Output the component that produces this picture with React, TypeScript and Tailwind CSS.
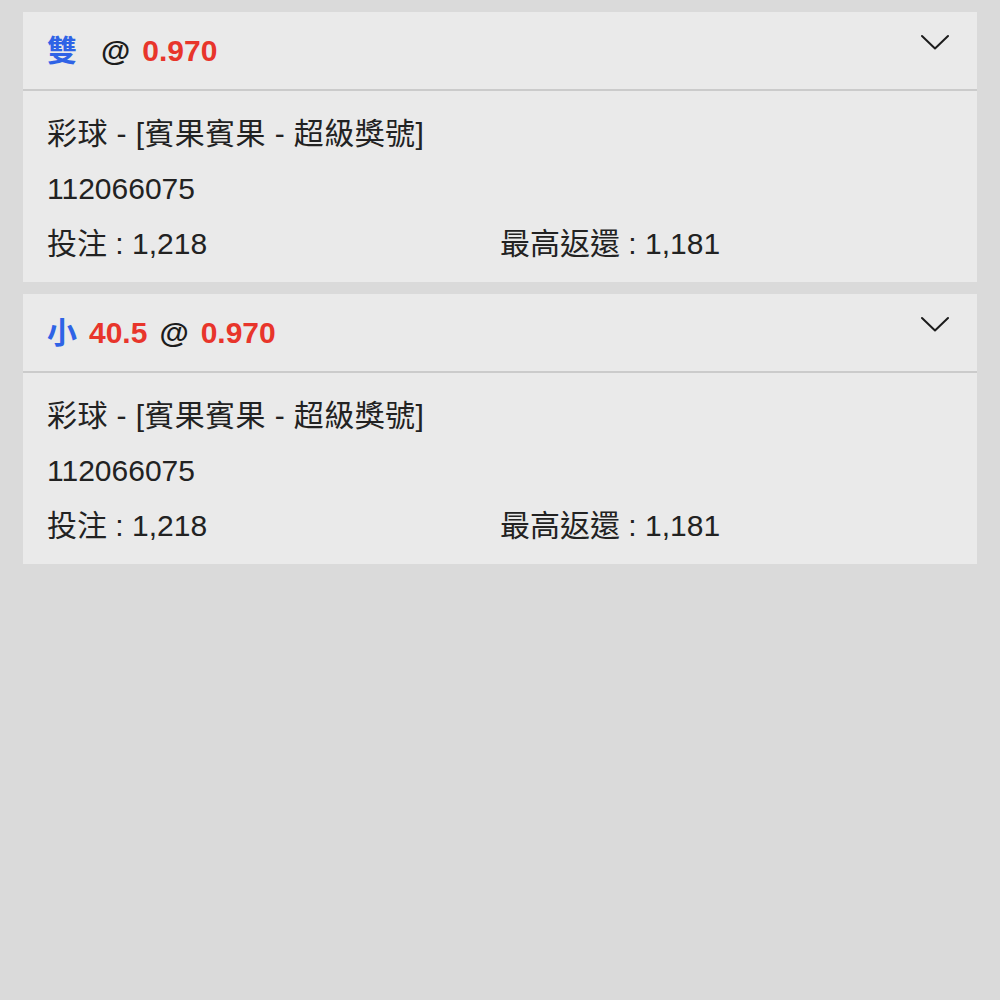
const font = {
  fontFamily: '"Liberation Sans", "Noto Sans CJK TC", sans-serif',
};

type Bet = {
  pick: string;
  line: string;
  odds: string;
  game: string;
  issue: string;
  stake: string;
  payout: string;
};

const bets: Bet[] = [
  {
    pick: "雙",
    line: "",
    odds: "0.970",
    game: "彩球 - [賓果賓果 - 超級獎號]",
    issue: "112066075",
    stake: "1,218",
    payout: "1,181",
  },
  {
    pick: "小",
    line: "40.5",
    odds: "0.970",
    game: "彩球 - [賓果賓果 - 超級獎號]",
    issue: "112066075",
    stake: "1,218",
    payout: "1,181",
  },
];

function Chevron() {
  return (
    <svg width="28" height="16" viewBox="0 0 28 16" fill="none" className="mt-[22px] shrink-0">
      <path d="M1 2 L14 14.5 L27 2" stroke="#1c1c1c" strokeWidth="2" strokeLinecap="round" strokeLinejoin="round" />
    </svg>
  );
}

function BetCard({ bet }: { bet: Bet }) {
  return (
    <div className="bg-[#eaeaea]">
      <div className="flex h-[79px] justify-between border-b-2 border-[#cbcbcb] pl-6 pr-[28px]">
        <div className="flex items-center gap-[12px] text-[30px] font-bold leading-none">
          <span className="text-[#2f63e6]">{bet.pick}</span>
          <span className="text-[#e8352b]">{bet.line}</span>
          <span className="text-[#1c1c1c]">@</span>
          <span className="text-[#e8352b]">{bet.odds}</span>
        </div>
        <Chevron />
      </div>
      <div className="px-6 pb-[11px] pt-[15px] text-[30px] leading-[55px] text-[#222]">
        <div className="tracking-[0.4px]">{bet.game}</div>
        <div>{bet.issue}</div>
        <div className="grid grid-cols-2">
          <div>投注 : {bet.stake}</div>
          <div>最高返還 : {bet.payout}</div>
        </div>
      </div>
    </div>
  );
}

export default function App() {
  return (
    <div className="min-h-screen bg-[#dadada] px-[23px] pt-3" style={font}>
      <div className="flex flex-col gap-3">
        {bets.map((b, i) => (
          <BetCard key={i} bet={b} />
        ))}
      </div>
    </div>
  );
}
